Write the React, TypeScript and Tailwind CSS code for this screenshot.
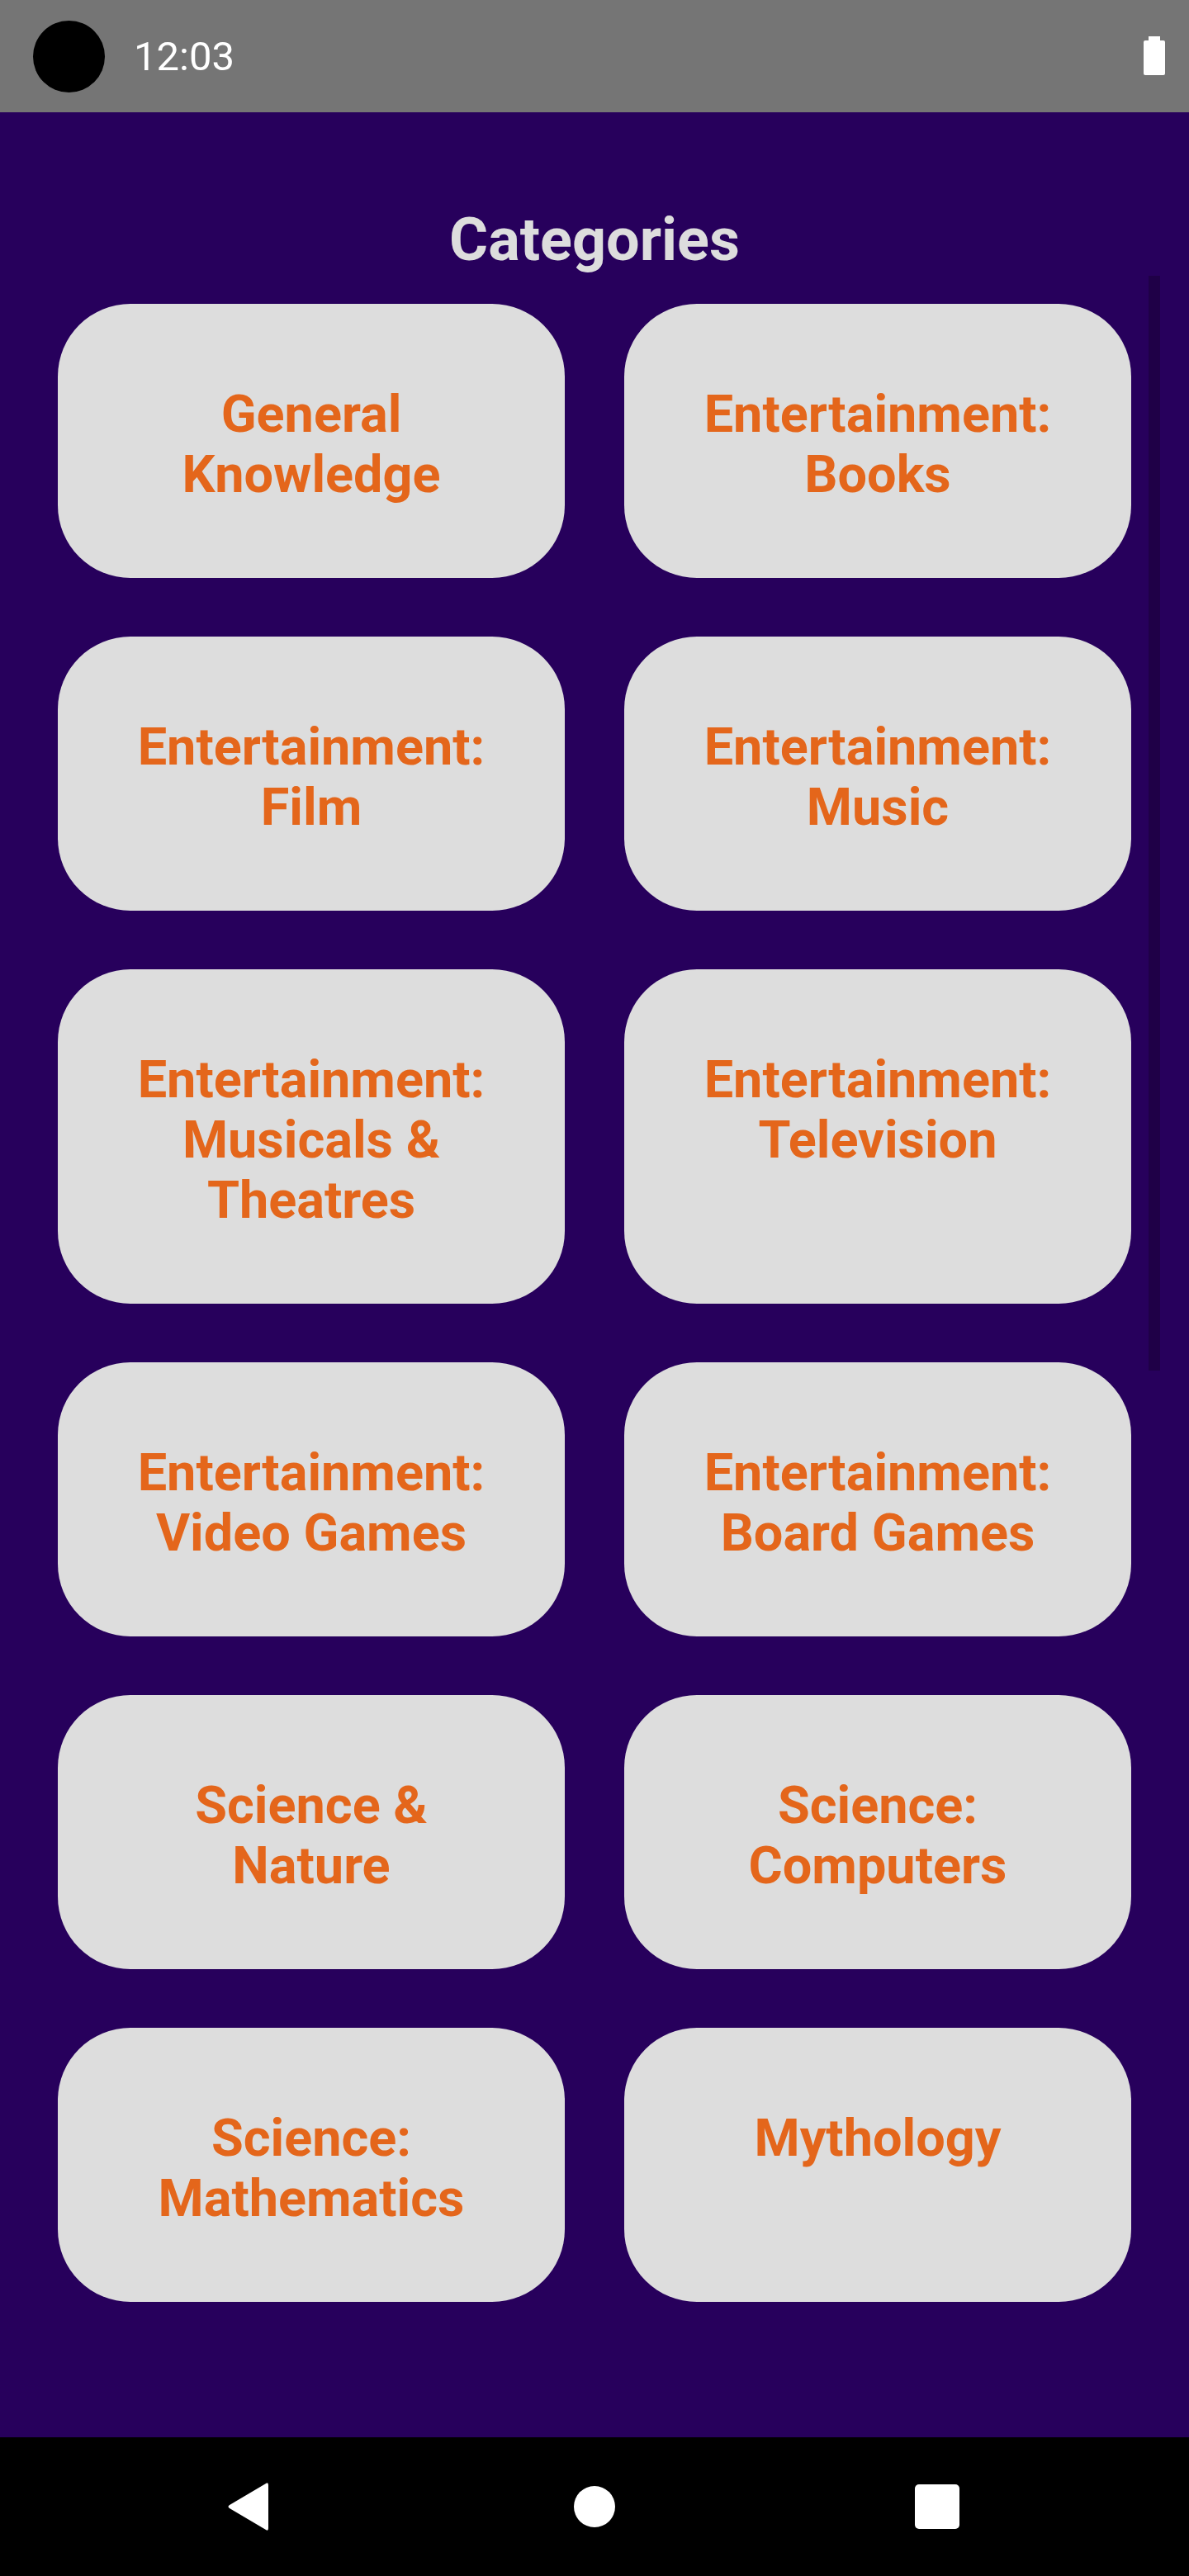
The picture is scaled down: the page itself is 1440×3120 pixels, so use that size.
import { FC } from "react";

const categories = [
  "General Knowledge",
  "Entertainment: Books",
  "Entertainment: Film",
  "Entertainment: Music",
  "Entertainment: Musicals & Theatres",
  "Entertainment: Television",
  "Entertainment: Video Games",
  "Entertainment: Board Games",
  "Science & Nature",
  "Science: Computers",
  "Science: Mathematics",
  "Mythology",
];

const StatusBar: FC = () => (
  <div className="h-[136px] shrink-0 bg-[#757575] flex items-center">
    <div className="ml-[40px] w-[87px] h-[87px] rounded-full bg-black" />
    <span className="ml-[35px] text-[49px] leading-[56px] text-white pt-[1px]">
      12:03
    </span>
    <svg
      className="ml-auto mr-[28px] mt-[-2px]"
      width="28"
      height="47"
      viewBox="0 0 28 47"
    >
      <rect x="7" y="0" width="14" height="6" fill="#ffffff" />
      <rect x="1" y="5" width="26" height="42" rx="2" fill="#ffffff" />
    </svg>
  </div>
);

const CategoryCard: FC<{ name: string }> = ({ name }) => (
  <button className="bg-[#dddddd] rounded-[88px] px-[80px] pt-[97px] pb-[89px] flex justify-center items-start text-center">
    <span className="text-[63px] leading-[73px] font-bold text-[#e4661b]">
      {name}
    </span>
  </button>
);

const NavBar: FC = () => (
  <div className="h-[168px] shrink-0 bg-black flex items-center">
    <svg
      className="ml-[273px]"
      width="56"
      height="60"
      viewBox="0 0 56 60"
    >
      <path
        d="M52 4 L52 56 Q52 60 49 58 L5 32 Q2 30 5 28 L49 2 Q52 0 52 4 Z"
        fill="#ffffff"
      />
    </svg>
    <div className="ml-[366px] w-[50px] h-[50px] rounded-full bg-white" />
    <div className="ml-[363px] w-[54px] h-[54px] rounded-[5px] bg-white" />
  </div>
);

export default function App() {
  return (
    <div className="w-[1440px] h-[3120px] flex flex-col bg-[#27005c] font-['Roboto',sans-serif]">
      <StatusBar />
      <main className="flex-1 relative flex flex-col">
        <h1 className="pt-[113px] text-center text-[72px] leading-[84px] font-bold text-[#dddddd]">
          Categories
        </h1>
        <div className="pt-[35px] px-[70px] grid grid-cols-2 gap-x-[72px] gap-y-[71px]">
          {categories.map((c) => (
            <CategoryCard key={c} name={c} />
          ))}
        </div>
        <div className="absolute left-[1391px] top-[198px] w-[14px] h-[1326px] bg-[#1f0047]" />
      </main>
      <NavBar />
    </div>
  );
}
